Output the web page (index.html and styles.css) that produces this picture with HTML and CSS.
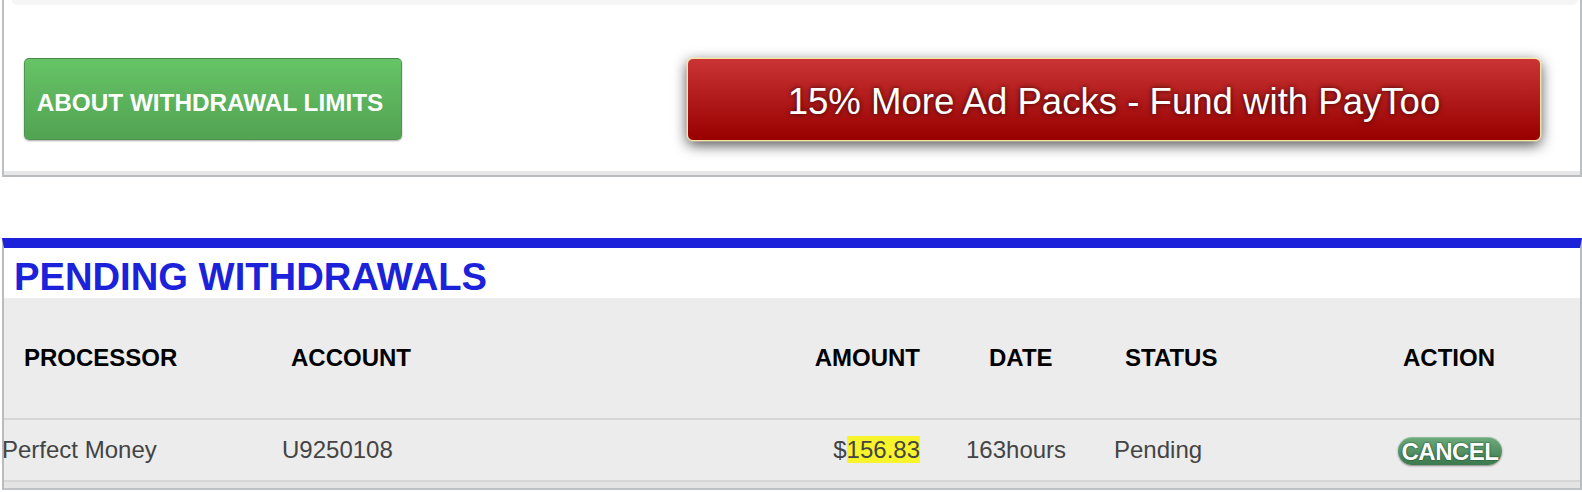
FILE: index.html
```html
<!DOCTYPE html>
<html lang="en">
<head>
<meta charset="utf-8">
<title>Withdrawals</title>
<link rel="stylesheet" href="styles.css">
</head>
<body>
<div class="page">
  <div class="panel">
    <div class="panel-strip"></div>
    <div class="panel-body">
      <a class="btn-green" href="#">ABOUT WITHDRAWAL LIMITS</a>
      <a class="btn-red" href="#">15% More Ad Packs - Fund with PayToo</a>
    </div>
  </div>

  <div class="section">
    <h2 class="section-title">PENDING WITHDRAWALS</h2>
    <div class="table">
      <div class="row head">
        <div class="cell c1">PROCESSOR</div>
        <div class="cell c2">ACCOUNT</div>
        <div class="cell c3">AMOUNT</div>
        <div class="cell c4">DATE</div>
        <div class="cell c5">STATUS</div>
        <div class="cell c6">ACTION</div>
      </div>
      <div class="row data">
        <div class="cell c1"><span class="pull">Perfect Money</span></div>
        <div class="cell c2">U9250108</div>
        <div class="cell c3">$<span class="hl">156.83</span></div>
        <div class="cell c4">163hours</div>
        <div class="cell c5">Pending</div>
        <div class="cell c6"><a class="btn-cancel" href="#">CANCEL</a></div>
      </div>
    </div>
  </div>
</div>
</body>
</html>
```

FILE: styles.css
```css
* { box-sizing: border-box; }
html, body { margin: 0; padding: 0; background: #fff; }
body { font-family: "Liberation Sans", Arial, sans-serif; }

.page { margin-left: 2px; width: 1580px; }

/* top panel */
.panel {
  height: 177px;
  border-left: 2px solid #bdc0c3;
  border-right: 2px solid #bdc0c3;
  border-bottom: 2px solid #b8bcbf;
  box-shadow: inset 0 -4px 0 #e6e6e6;
  background: #fff;
}
.panel-strip {
  height: 5px;
  margin: 0 2px 0 8px;
  background: #f5f5f5;
  border-radius: 0 0 6px 6px;
}
.panel-body {
  display: flex;
  align-items: flex-start;
  padding: 53px 39px 0 20px;
}
.btn-green {
  display: flex;
  align-items: center;
  justify-content: center;
  width: 378px;
  height: 82px;
  padding: 7px 6px 0 0;
  border: 1px solid #4f944f;
  border-top-color: #4a8a4a;
  border-radius: 5px;
  background: linear-gradient(#66c466, #52a352);
  box-shadow: 0 1px 2px rgba(0,0,0,0.35);
  color: #fff;
  font-weight: bold;
  font-size: 24.3px;
  text-decoration: none;
  white-space: nowrap;
}
.btn-red {
  display: flex;
  align-items: center;
  justify-content: center;
  margin-left: auto;
  width: 854px;
  height: 83px;
  padding-top: 5px;
  border: 1px solid #f6e4a2;
  border-radius: 6px;
  background: linear-gradient(#ca3434, #980000);
  box-shadow: 0 0 0 1px rgba(255,240,180,0.35), 0 4px 14px rgba(0,0,0,0.7);
  color: #fff;
  font-size: 36.6px;
  text-decoration: none;
  text-shadow: 0 0 5px rgba(40,0,0,0.9);
  white-space: nowrap;
}

/* section */
.section {
  margin-top: 61px;
  border-top: 10px solid #1b22d9;
  border-left: 2px solid #b9bcbf;
  border-right: 2px solid #b9bcbf;
  border-bottom: 2px solid #bfc2c4;
}
.section-title {
  margin: 0;
  height: 50px;
  padding: 7px 0 0 10px;
  line-height: 43px;
  font-size: 38.2px;
  font-weight: bold;
  color: #1b22d9;
  background: #fff;
}
.table {
  background: #ececec;
  padding-bottom: 6px;
  box-shadow: inset 0 -6px 0 #e4e4e4;
}
.row {
  display: grid;
  grid-template-columns: 256px 440px 240px 150px 210px 280px;
  align-items: center;
  border-bottom: 2px solid #d6d6d6;
  font-size: 24px;
  white-space: nowrap;
}
.row.head { height: 122px; font-weight: bold; color: #000; }
.row.data { height: 62px; color: #444; }

.cell { line-height: 28px; }
.c3 { text-align: right; padding-right: 20px; }

.head .c1 { padding-left: 20px; }
.head .c2 { padding-left: 31px; }
.head .c4 { padding-left: 49px; }
.head .c5 { padding-left: 35px; }
.head .c6 { padding-left: 103px; }

.data .c1 { padding-left: 0; }
.data .c2 { padding-left: 22px; }
.data .c4 { padding-left: 26px; }
.data .c5 { padding-left: 24px; }
.data .c6 { padding-left: 98px; }

.pull { margin-left: -2px; }
.hl { background: #f8f42c; }

.btn-cancel {
  display: inline-block;
  width: 104px;
  height: 28px;
  line-height: 29px;
  text-align: center;
  border-radius: 14px;
  background: linear-gradient(#6dab7c, #3c7a4e);
  box-shadow: 0 1px 2px rgba(0,0,0,0.45), inset 0 1px 0 rgba(255,255,255,0.25);
  color: #fff;
  font-weight: bold;
  font-size: 24px;
  letter-spacing: -0.5px;
  text-decoration: none;
  text-shadow: 0 0 2px #1d4a2b, 0 0 1px #1d4a2b;
  vertical-align: middle;
}
```
